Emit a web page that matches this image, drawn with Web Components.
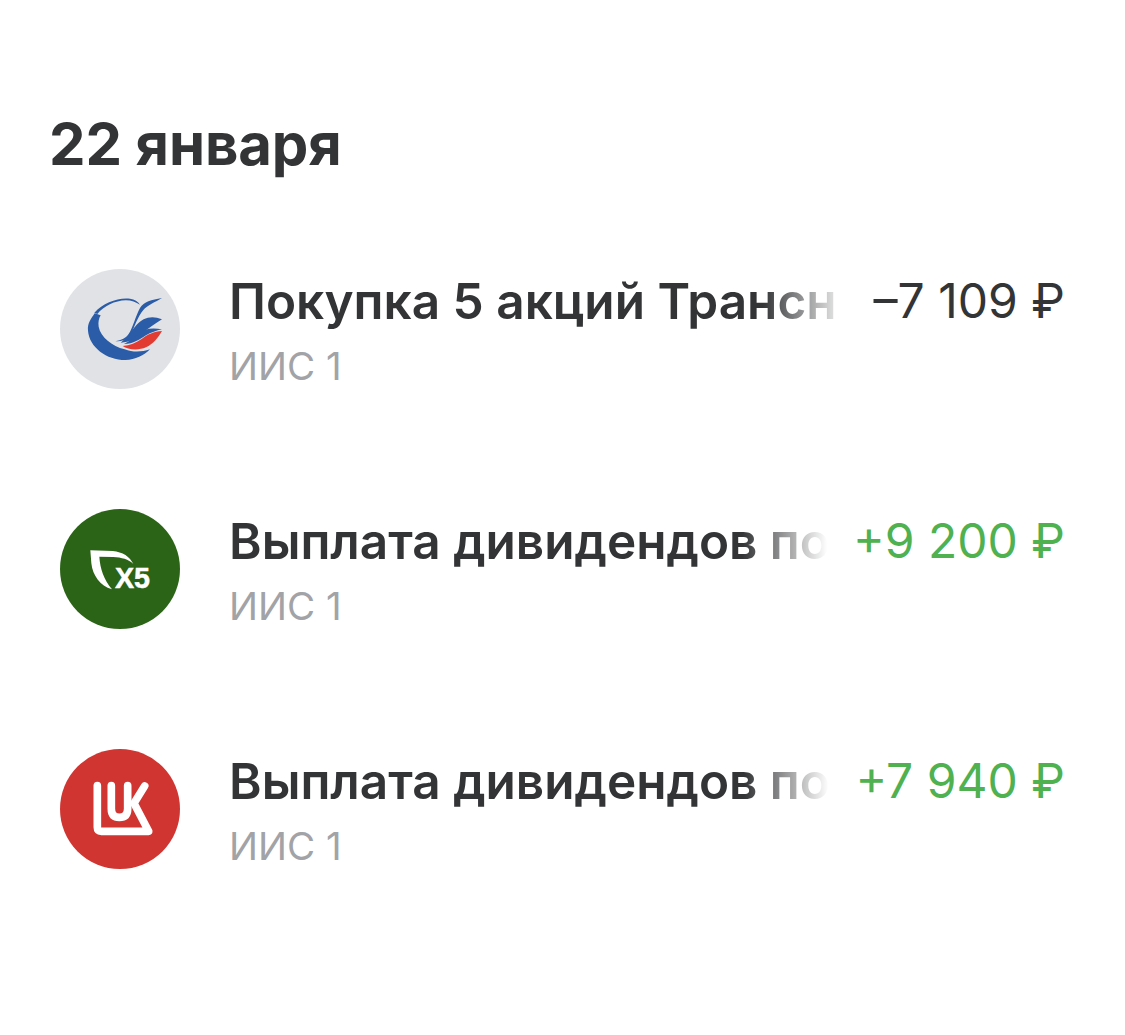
<!DOCTYPE html>
<html lang="ru">
<head>
<meta charset="utf-8">
<title>Операции</title>
<style>
  html, body { margin: 0; background: #fff; }
  body { font-family: Inter, "Noto Sans", sans-serif; color: #333436; }
</style>
</head>
<body>
<op-feed>
  <op-date slot="date">22 января</op-date>
  <op-row title-text="Покупка 5 акций Трансн" amount="–7 109 ₽" sub="ИИС 1">
    <svg slot="logo" viewBox="30 27 360 360" width="120" height="120">
      <circle cx="210" cy="207" r="180" fill="#e0e2e6"/>
      <path d="M134 160 C124 176 112 188 114 212 C118 262 170 300 226 300 C256 300 282 286 300 268 C276 276 250 278 224 268 C186 258 152 232 146 200 C144 188 146 176 152 166 Z" fill="#2b5ca8"/>
      <path d="M133 158 C160 128 204 112 240 116 C254 118 264 124 270 134 C258 127 244 121 228 121 C194 122 162 138 142 162 Z" fill="#2b5ca8"/>
      <path d="M336 114 C304 120 282 124 270 144 C256 170 250 200 236 222 C228 234 214 240 196 244 C216 244 236 238 242 224 C254 200 262 172 280 150 C292 136 316 126 336 114 Z" fill="#2b5ca8"/>
      <path d="M336 178 C304 164 278 174 260 194 C246 210 232 232 212 248 C240 248 260 234 276 220 C294 206 314 192 336 178 Z" fill="#2b5ca8"/>
      <path d="M336 208 C306 202 282 206 266 220 C254 232 238 244 222 252 C250 252 270 238 288 226 C302 218 320 212 336 208 Z" fill="#2b5ca8"/>
      <path d="M336 213 C312 214 292 224 276 236 C258 248 240 256 218 258 C234 270 266 272 288 262 C310 252 324 234 336 213 Z" fill="#e23c32"/>
    </svg>
  </op-row>
  <op-row title-text="Выплата дивидендов по" amount="+9 200 ₽" sub="ИИС 1" tone="plus">
    <svg slot="logo" viewBox="30 27 360 360" width="120" height="120">
      <circle cx="210" cy="207" r="180" fill="#2b6417"/>
      <path d="M121 151 L188 153 C218 156 240 170 250 192 C236 178 214 172 190 171 L148 170 C150 205 162 240 186 268 C150 258 128 226 124 190 Z" fill="#fff"/>
      <text x="195" y="265" font-family="Liberation Sans, sans-serif" font-weight="700" font-size="86" stroke="#fff" stroke-width="1.5" fill="#fff">X5</text>
    </svg>
  </op-row>
  <op-row title-text="Выплата дивидендов по" amount="+7 940 ₽" sub="ИИС 1" tone="plus">
    <svg slot="logo" viewBox="30 27 360 360" width="120" height="120">
      <circle cx="210" cy="207" r="180" fill="#d03531"/>
      <path d="M142 137 V262 Q142 274 154 274 H296 L252 190 L284 138" fill="none" stroke="#fff" stroke-width="23" stroke-linecap="round" stroke-linejoin="round"/>
      <path d="M184 137 V206 Q184 232 208 232 Q233 232 233 206 V137" fill="none" stroke="#fff" stroke-width="23" stroke-linecap="round"/>
    </svg>
  </op-row>
</op-feed>
<script>
class OpFeed extends HTMLElement {
  constructor() {
    super();
    this.attachShadow({ mode: 'open' });
    this.shadowRoot.innerHTML = `
      <style>
        :host { display: block; width: 1125px; height: 1035px; overflow: hidden; box-sizing: border-box; padding: 114px 60px 0 60px; }
        .rows { display: flex; flex-direction: column; gap: 120px; margin-top: 95px; }
      </style>
      <slot name="date"></slot>
      <div class="rows"><slot></slot></div>`;
  }
}

class OpDate extends HTMLElement {
  constructor() {
    super();
    this.attachShadow({ mode: 'open' });
    this.shadowRoot.innerHTML = `
      <style>
        :host { display: block; margin-left: -11px; font-size: 58px; line-height: 60px; font-weight: 700; color: #333436; letter-spacing: -0.1px; }
      </style>
      <slot></slot>`;
  }
}

class OpRow extends HTMLElement {
  constructor() {
    super();
    this.attachShadow({ mode: 'open' });
    this.shadowRoot.innerHTML = `
      <style>
        :host { display: flex; align-items: flex-start; height: 120px; }
        .logo { flex: none; width: 120px; height: 120px; margin-right: 49px; }
        .logo ::slotted(svg) { display: block; }
        .body { flex: 1; min-width: 0; }
        .top { display: flex; height: 60px; align-items: center; margin-top: 2px; line-height: 60px; }
        .name {
          flex: 1; min-width: 0; white-space: nowrap; overflow: hidden; font-size: 49.5px; font-weight: 600; color: #333436;
          -webkit-mask-image: linear-gradient(to right, #000 calc(100% - 85px), transparent 100%);
          mask-image: linear-gradient(to right, #000 calc(100% - 85px), transparent 100%);
        }
        .amount { flex: none; margin-left: 26px; white-space: nowrap; font-size: 48px; font-weight: 400; color: #333436; }
        :host([tone="plus"]) .amount { color: #4fb150; }
        .sub { font-size: 38.5px; line-height: 44px; margin-top: 13px; color: #a2a3a7; }
      </style>
      <div class="logo"><slot name="logo"></slot></div>
      <div class="body">
        <div class="top"><div class="name"></div><div class="amount"></div></div>
        <div class="sub"></div>
      </div>`;
  }

  connectedCallback() {
    this.shadowRoot.querySelector('.name').textContent = this.getAttribute('title-text');
    this.shadowRoot.querySelector('.amount').textContent = this.getAttribute('amount');
    this.shadowRoot.querySelector('.sub').textContent = this.getAttribute('sub');
  }
}

window.customElements.define('op-feed', OpFeed);
window.customElements.define('op-date', OpDate);
window.customElements.define('op-row', OpRow);
</script>
</body>
</html>
